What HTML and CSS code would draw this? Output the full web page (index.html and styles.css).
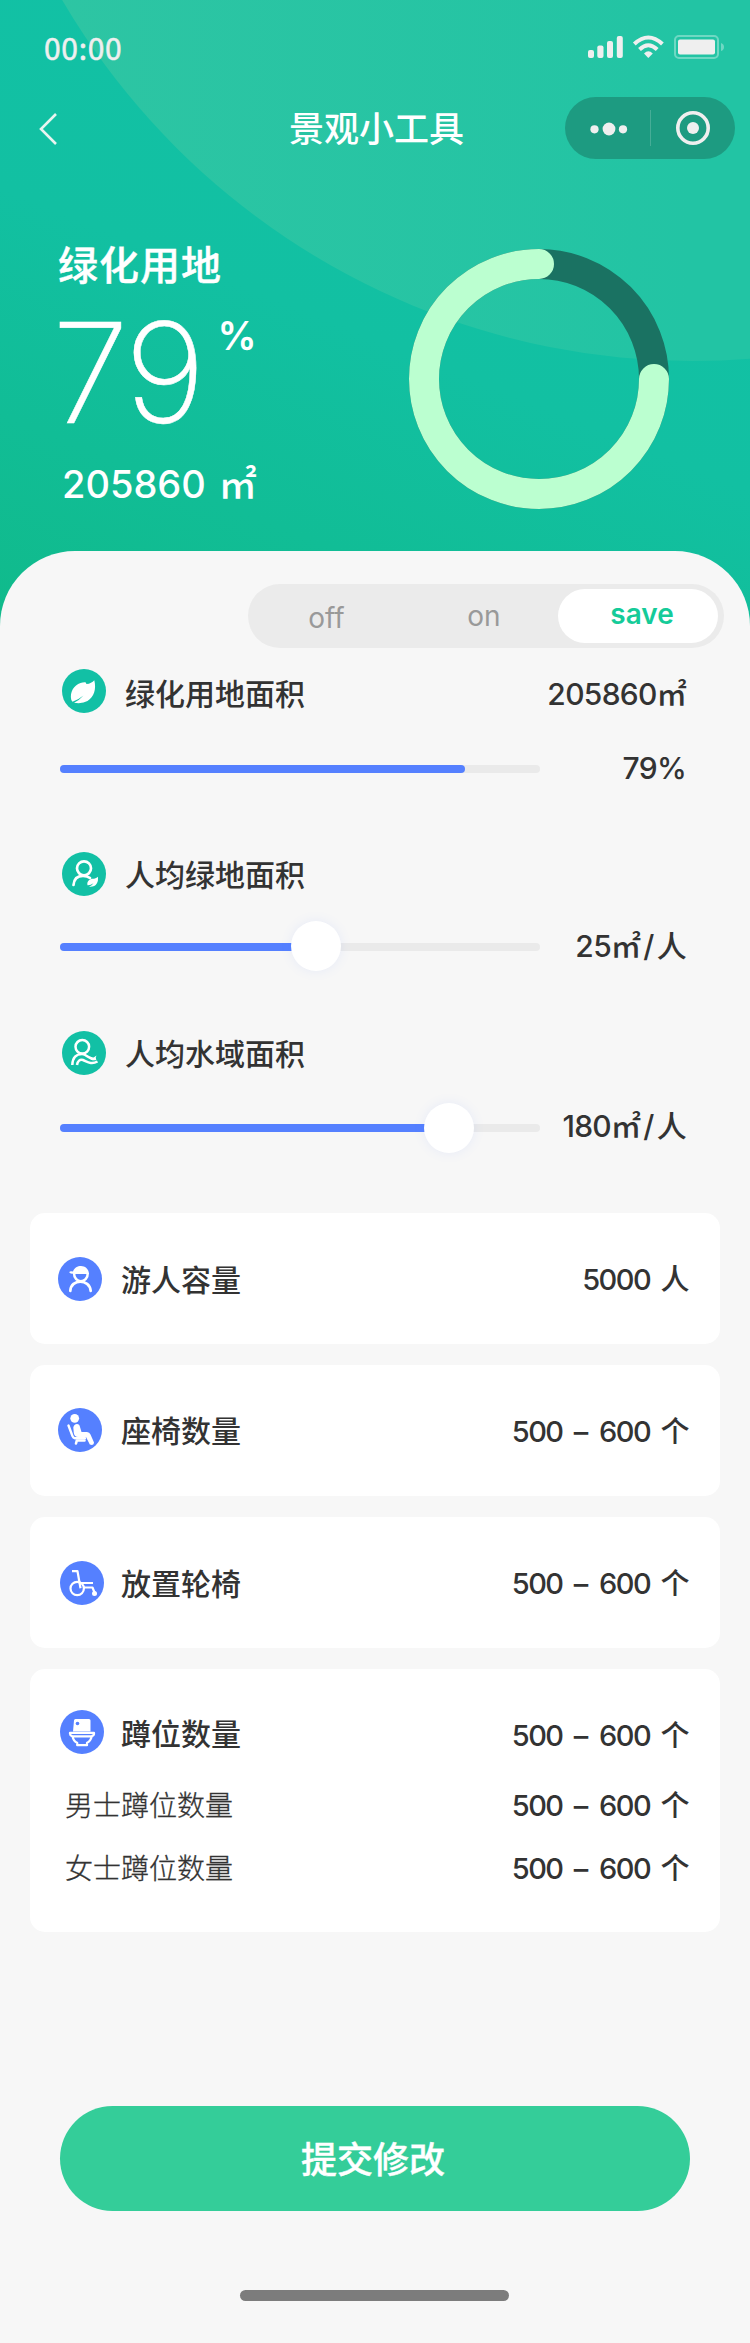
FILE: index.html
```html
<!DOCTYPE html>
<html lang="zh-CN">
<head>
<meta charset="utf-8">
<title>景观小工具</title>
<link rel="stylesheet" href="styles.css">
</head>
<body>
<div class="page">
  <header class="hero">
    <div class="status">
      <span class="time">00:00</span>
      <svg class="status-icons" width="138" height="26" viewBox="587 34 138 26">
        <g fill="#efefef">
          <rect x="588" y="50" width="6" height="8" rx="2"/>
          <rect x="597.3" y="45.5" width="6.2" height="12.5" rx="2"/>
          <rect x="607" y="41" width="6" height="17" rx="2"/>
          <rect x="616.8" y="36" width="6" height="22" rx="2"/>
          <path d="M644 53.5Q648.3 49 652.8 53.5L648.3 58Z"/>
        </g>
        <g fill="none" stroke="#efefef" stroke-width="4">
          <path d="M639.5 49.5Q648.3 41 657.2 49.5"/>
          <path d="M634.3 44Q648.3 31 662.4 44"/>
        </g>
        <rect x="675" y="36" width="43" height="22" rx="4" fill="none" stroke="#fff" stroke-opacity=".35" stroke-width="2"/>
        <rect x="678" y="39.5" width="37" height="15" rx="2" fill="#efefef"/>
        <path d="M721 43v8q3-1 3-4t-3-4z" fill="#fff" fill-opacity=".35"/>
      </svg>
    </div>
    <nav class="nav">
      <svg class="back" width="18" height="34" viewBox="39 112 18 34"><path d="M56 114L41 129L56 144" fill="none" stroke="#e8f4f0" stroke-width="2.6"/></svg>
      <h1 class="title">景观小工具</h1>
      <svg class="capsule" width="170" height="62" viewBox="565 97 170 62">
        <rect x="565" y="97" width="170" height="62" rx="31" fill="#1d9b81"/>
        <g fill="#efefef"><circle cx="594.5" cy="129.3" r="4.1"/><circle cx="609" cy="129" r="6.4"/><circle cx="623" cy="129.3" r="4.1"/><circle cx="693" cy="128" r="6"/></g>
        <path d="M650.5 110v36" stroke="#46ad97"/>
        <circle cx="693" cy="128" r="15.2" fill="none" stroke="#efefef" stroke-width="3.6"/>
      </svg>
    </nav>
    <div class="summary">
      <div class="figures">
        <div class="caption">绿化用地</div>
        <div class="percent"><span class="big">79</span><span class="sign">%</span></div>
        <div class="area">205860<span class="area-unit">㎡</span></div>
      </div>
      <svg class="ring" width="260" height="260" viewBox="0 0 260 260">
        <circle cx="130" cy="130" r="115" fill="none" stroke="#1a7262" stroke-width="30"/>
        <path d="M245 130A115 115 0 1 1 130 15" fill="none" stroke="#bbffd0" stroke-width="30" stroke-linecap="round"/>
      </svg>
    </div>
  </header>

  <main class="sheet">
    <div class="segment">
      <span class="seg seg-off">off</span><span class="seg seg-on">on</span><span class="seg seg-save">save</span>
    </div>

    <section class="metric metric-1">
      <div class="metric-head">
        <svg class="icon" viewBox="0 0 44 44"><circle cx="22" cy="22" r="22" fill="#12c0a5"/><path d="M9.3 31C7.5 23 12 16 18.500 14Q21 13 23.500 13.200L24.500 15Q29.500 14.500 32.300 11.200C34.500 20 32 28 25.500 32Q20.500 35 12 33.800Q17 31.500 21.500 26.500Q16 31 10.500 32.700Z" fill="#fff"/></svg>
        <span class="label">绿化用地面积</span><span class="value">205860㎡</span>
      </div>
      <div class="slider-row"><div class="track"><div class="fill" style="width:405px"></div></div><span class="value">79%</span></div>
    </section>

    <section class="metric metric-2">
      <div class="metric-head">
        <svg class="icon" viewBox="0 0 44 44"><circle cx="22" cy="22" r="22" fill="#12c0a5"/><g fill="none" stroke="#fff" stroke-width="2.700" stroke-linecap="round"><circle cx="22" cy="16.300" r="7"/><path d="M11.500 33C12 26 16 23.800 21 23.800Q25.500 23.800 28 26"/></g><path d="M25.500 33.300C24.500 29 28 26.500 32 26.800Q34.500 26.500 35.800 24.800C36.800 30 34.500 35.500 27 34.800Q30 33.500 31.500 31.300Q28.500 33.500 25.500 33.300Z" fill="#fff"/></svg>
        <span class="label">人均绿地面积</span>
      </div>
      <div class="slider-row"><div class="track"><div class="fill" style="width:256px"></div><div class="knob" style="left:231px"></div></div><span class="value">25㎡<span class="slash">/</span>人</span></div>
    </section>

    <section class="metric metric-3">
      <div class="metric-head">
        <svg class="icon" viewBox="0 0 44 44"><circle cx="22" cy="22" r="22" fill="#12c0a5"/><g fill="none" stroke="#fff" stroke-width="2.500" stroke-linecap="butt"><circle cx="20.300" cy="15.800" r="6.800"/><path d="M10.300 34C10.500 26 15 23 20 23C25 23 27.500 29.500 34 27.800"/><path d="M15 34C15.500 30 18 28 21 29C25 30.500 29 34 35.500 30.500"/></g><path d="M27.500 25.500L29.500 26L31 27L34.500 24.500Q34 28 31 29.500Q28 28.500 27.500 25.500Z" fill="#fff"/></svg>
        <span class="label">人均水域面积</span>
      </div>
      <div class="slider-row"><div class="track"><div class="fill" style="width:389px"></div><div class="knob flat" style="left:364px"></div></div><span class="value">180㎡<span class="slash">/</span>人</span></div>
    </section>

    <section class="cards">
      <div class="card">
        <div class="card-row">
          <svg class="icon" viewBox="0 0 44 44"><circle cx="22" cy="22" r="22" fill="#5580ff"/><path d="M15 14.500C16.500 10.500 19.500 9 23 9C28 9 31 13 31 17H15.500V16.500Q12 17 11.300 15.500Q11.500 13.700 15 14.500Z" fill="#fff"/><path d="M16 16C16 27 29.800 27 29.800 16" fill="none" stroke="#fff" stroke-width="2.500"/><path d="M12.300 33.800C13 21.500 31.500 21.500 32.700 33.800" fill="none" stroke="#fff" stroke-width="2.700" stroke-linecap="round"/></svg>
          <span class="label">游人容量</span><span class="value">5000 <i>人</i></span>
        </div>
      </div>
      <div class="card">
        <div class="card-row up">
          <svg class="icon" viewBox="0 0 44 44"><circle cx="22" cy="22" r="22" fill="#5580ff"/><g fill="#fff"><circle cx="16.700" cy="10.300" r="4.400"/><path d="M15.300 19.500Q16 16 19 16Q21.500 16 22 19L23.500 24H29Q31.500 24 32.500 26.500L36 34.500Q36 36.500 34 37L31.800 36.500L28 29H20Q16.500 29 15.800 25Z"/></g><g fill="none" stroke="#fff" stroke-linecap="round" stroke-linejoin="round"><path d="M10.500 17.500L14.500 28.200Q15.200 30 17 30.300H27" stroke-width="2.400"/><path d="M18 35.500L18.800 32.500H26.500" stroke-width="2.600"/></g></svg>
          <span class="label">座椅数量</span><span class="value">500 <b>–</b> 600 <i>个</i></span>
        </div>
      </div>
      <div class="card">
        <div class="card-row shift">
          <svg class="icon" viewBox="0 0 44 44"><circle cx="22" cy="22" r="22" fill="#5580ff"/><g fill="none" stroke="#fff" stroke-width="2.200" stroke-linejoin="round"><path d="M12 10.200H17.500L20.500 27.300"/><circle cx="17.200" cy="27.500" r="6.700"/><path d="M19.500 22H33M23.500 26.500H32.500L34.500 31.500"/></g><circle cx="34.500" cy="32.500" r="2.500" fill="#fff"/></svg>
          <span class="label">放置轮椅</span><span class="value">500 <b>–</b> 600 <i>个</i></span>
        </div>
      </div>
      <div class="card tall">
        <div class="card-row shift">
          <svg class="icon" viewBox="0 0 44 44"><circle cx="22" cy="22" r="22" fill="#5580ff"/><path d="M14 10.500Q14 9 15.500 9H29Q30.500 9 30.500 10.500V21.500H13Z" fill="#fff"/><circle cx="17.500" cy="13.500" r="1.800" fill="#5580ff"/><g fill="none" stroke="#fff" stroke-width="2.200" stroke-linejoin="round"><path d="M10 24V22.800H34V24Q34 25.500 31.500 26"/><path d="M10 24Q10.500 26 12.500 26"/><path d="M12.500 26.300Q13.500 31.500 17.200 32.800V35.200H27V32.800Q30.500 31.500 31.800 26.300Z"/></g></svg>
          <span class="label">蹲位数量</span><span class="value">500 <b>–</b> 600 <i>个</i></span>
        </div>
        <div class="sub-row first"><span class="sub-label">男士蹲位数量</span><span class="value">500 <b>–</b> 600 <i>个</i></span></div>
        <div class="sub-row"><span class="sub-label">女士蹲位数量</span><span class="value">500 <b>–</b> 600 <i>个</i></span></div>
      </div>
    </section>

    <button class="submit">提交修改</button>
    <div class="home-bar"></div>
  </main>
</div>
</body>
</html>
```
FILE: styles.css
```css
* { box-sizing: border-box; }

body {
  margin: 0;
  background: #f7f7f7;
  color: #333;
  font-family: Inter, "Noto Sans CJK SC", sans-serif;
}

.page { width: 750px; height: 2343px; overflow: hidden; }

.hero {
  position: relative;
  height: 640px;
  overflow: hidden;
  color: #fff;
  background: linear-gradient(22deg, #10ba8a 0%, #12c0a2 48%, #12c2a8 100%);
}

.hero::before {
  content: "";
  position: absolute;
  left: -38px;
  top: -1099px;
  width: 1460px;
  height: 1460px;
  border-radius: 50%;
  background: linear-gradient(90deg, #2fc5a3, #22c4a4 50%);
}

.status, .nav, .summary { position: relative; display: flex; }

.status { height: 97px; padding: 34px 25px 0 44px; justify-content: space-between; }
.time {
  margin-top: -2px;
  font: 400 30px/30px "Noto Sans CJK SC", sans-serif;
  color: #efefef;
  letter-spacing: .7px;
  -webkit-text-stroke: .5px #efefef;
}
.status-icons { display: block; }

.nav { height: 62px; padding: 0 15px 0 39px; align-items: center; }
.back { margin-top: 2px; }
.title {
  margin: -2px 0 0 232px;
  font: 500 35px/62px "Noto Sans CJK SC", sans-serif;
  white-space: nowrap;
}
.capsule { margin-left: auto; }

.summary { padding: 90px 81px 0 58px; justify-content: space-between; }
.caption {
  margin-top: -16px;
  font: 500 40px/60px "Noto Sans CJK SC", sans-serif;
  letter-spacing: 1px;
  -webkit-text-stroke: .4px #fff;
}
.percent { display: flex; height: 151px; }
.big {
  margin: 2px 0 0 -6px;
  font-size: 139px;
  font-weight: 200;
  line-height: 156px;
  letter-spacing: -3px;
  -webkit-text-stroke: .5px #fff;
}
.sign { margin: 19px 0 0 15px; font-size: 39px; font-weight: 600; line-height: 48px; }
.area {
  margin: 15px 0 0 4px;
  font-size: 38px;
  font-weight: 500;
  line-height: 50px;
  white-space: nowrap;
}
.area-unit { margin-left: 13px; }

.sheet {
  position: relative;
  height: 1792px;
  margin-top: -89px;
  padding-top: 33px;
  border-radius: 75px 75px 0 0;
  background: #f7f7f7;
}

.segment {
  display: grid;
  grid-template-columns: 151px 153px 160px;
  width: 476px;
  height: 64px;
  margin-left: 248px;
  padding: 5px 6px;
  border-radius: 32px;
  background: #ebebeb;
}
.seg { height: 54px; font-size: 28px; line-height: 54px; text-align: center; color: #999; font-weight: 400; }
.seg-off { padding: 2px 6px 0 0; }
.seg-on { padding: 0 0 0 5px; }
.seg-save {
  padding-left: 8px;
  border-radius: 27px;
  background: #fff;
  color: #15cb99;
  font-weight: 600;
  line-height: 51px;
}

.icon { flex: none; width: 44px; height: 44px; }
.label { margin-top: -1px; font: 500 30px/44px "Noto Sans CJK SC", sans-serif; white-space: nowrap; }
.value {
  margin-left: auto;
  font-size: 30px;
  font-weight: 500;
  line-height: 44px;
  letter-spacing: -.7px;
  white-space: nowrap;
}
.slash { margin: 0 3px; }

.metric { padding: 0 64px 0 60px; }
.metric-1 { margin-top: 21px; height: 183px; }
.metric-2 { height: 179px; }
.metric-3 { height: 182px; }
.metric-head { display: flex; height: 44px; padding-left: 2px; }
.metric-head .label { margin-left: 19px; }
.metric-1 .metric-head .label { margin-top: 1px; }
.metric-1 .metric-head .value { margin-top: 3px; }

.slider-row { display: flex; align-items: center; height: 44px; margin-top: 34px; }
.slider-row .value { margin-top: -2px; }
.metric-2 .slider-row { margin-top: 29px; }
.metric-3 .slider-row { margin-top: 31px; }
.metric-3 .slider-row .value { margin-top: -4px; }
.track { position: relative; width: 480px; height: 8px; border-radius: 4px; background: #eaeaea; }
.fill { height: 8px; border-radius: 4px; background: #5580ff; }
.knob {
  position: absolute;
  top: -22px;
  width: 50px;
  height: 50px;
  border-radius: 50%;
  background: #fff;
  box-shadow: 0 0 12px rgba(85, 128, 255, .1);
}
.knob.flat { top: -21px; }

.cards { display: grid; gap: 21px; padding: 0 30px; }
.card { height: 131px; padding: 44px 32px 0 28px; border-radius: 15px; background: #fff; }
.card.tall { height: 263px; padding-top: 41px; }
.card-row { display: flex; height: 44px; }
.card-row .label { margin-left: 19px; }
.card-row.up { margin-top: -1px; }
.shift { padding-left: 2px; }
.shift .label { margin-left: 17px; }
.card .value { margin-top: 1px; font-size: 29px; letter-spacing: -1.500px; }
.card-row.up .value { margin-top: 2px; }
.card.tall .card-row .value { margin-top: 4px; }
.card.tall .card-row .label { margin-top: 0; }
.value i, .value b { font-style: normal; font-weight: 500; }
.value i { margin-left: 4px; }
.value b { margin: 0 6px 0 5px; }
.sub-row { display: flex; height: 63px; padding-left: 7px; }
.sub-row.first { margin-top: 29px; }
.sub-label { font: 300 28px/42px "Noto Sans CJK SC", sans-serif; -webkit-text-stroke: .3px #333; }

.submit {
  display: block;
  width: 630px;
  height: 105px;
  margin: 174px 0 0 60px;
  padding: 0 4px 2px 0;
  border: 0;
  border-radius: 52.500px;
  background: #34cd99;
  color: #fff;
  font: 500 36px/103px "Noto Sans CJK SC", sans-serif;
  -webkit-text-stroke: .4px #fff;
}
.home-bar { width: 269px; height: 11px; margin: 79px 0 0 240px; border-radius: 5.500px; background: #7c7c7c; }
```
